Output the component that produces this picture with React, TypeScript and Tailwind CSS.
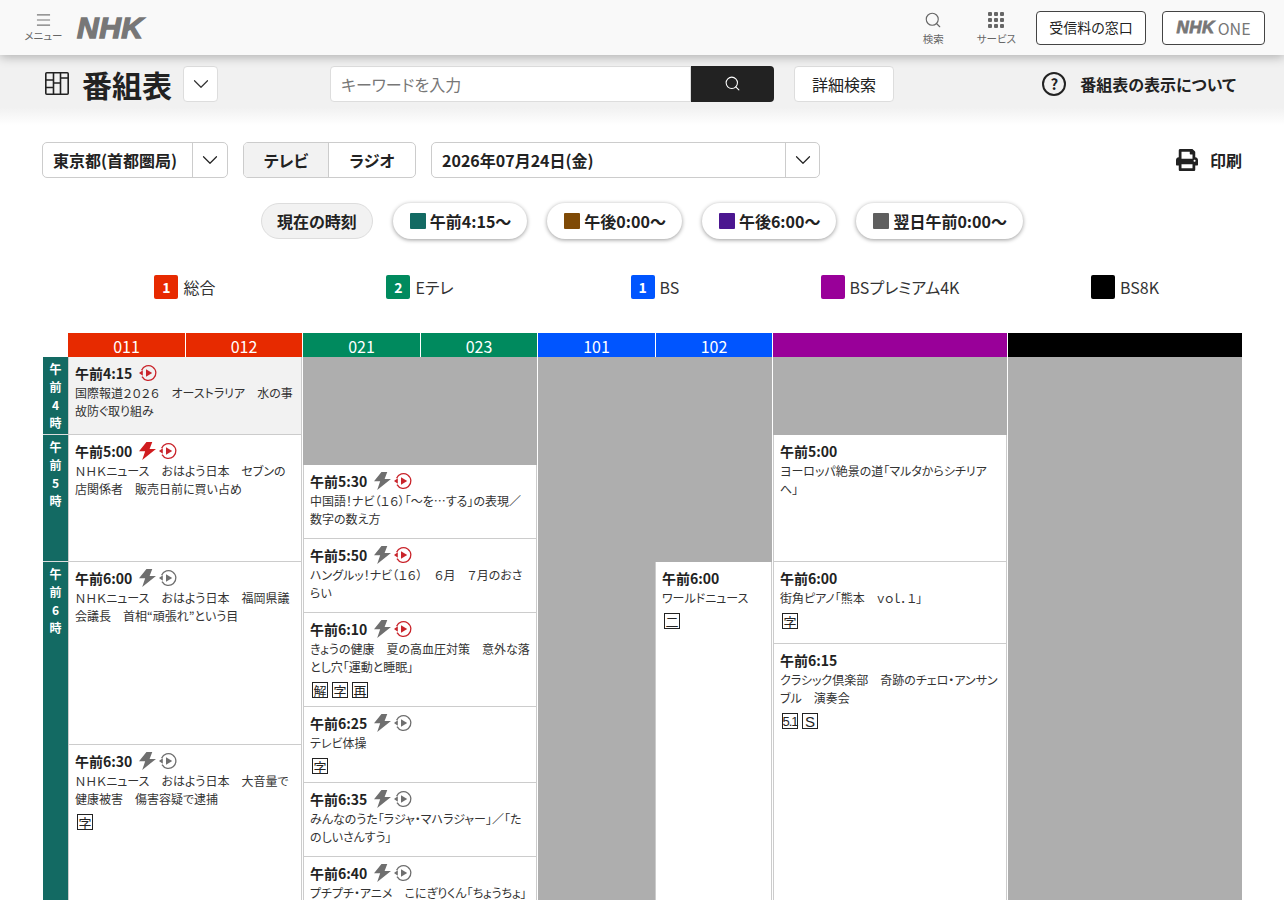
import { ChevronDown, Search } from 'lucide-react'
import { FaPrint } from 'react-icons/fa'

interface Program {
  time: string
  title: string
  height: number
  live?: boolean // 稲妻が赤
  replay?: boolean // 再生アイコンが赤
  icons?: 'none' | 'gray'
  badges?: string[]
  past?: boolean
}

// 番組名の英数字は全角で表示される
const zen = (s: string) => s.replace(/[!-~]/g, (c) => String.fromCharCode(c.charCodeAt(0) + 0xfee0))

function Bolt({ red }: { red?: boolean }) {
  return (
    <svg viewBox="0 0 16 17" className="w-[17px] h-[18px]" fill={red ? '#d01c1f' : '#6f6f6f'}>
      <path d="M7 0h5.5L10 6.5h6L3 17l2.8-8.2H0z" />
    </svg>
  )
}

function Replay({ red }: { red?: boolean }) {
  const c = red ? '#c9242b' : '#6f6f6f'
  return (
    <svg viewBox="0 0 18 18" className="w-[18px] h-[18px]" fill="none">
      <path d="M2.6 6.2A7.4 7.4 0 1 1 3 12.6" stroke={c} strokeWidth="1.3" />
      <path d="M0 9 3.8 6.2v5.6z" fill={c} />
      <path d="M7 5.2 13.2 9 7 12.8z" fill={c} />
    </svg>
  )
}

function Badge({ label }: { label: string }) {
  const latin = label === '5.1' || label === 'S'
  return (
    <span
      className={`w-[16px] h-[16px] border border-[#222] flex items-center justify-center leading-none text-[#222] bg-white [font-feature-settings:normal] ${
        latin ? `font-['Liberation_Sans',sans-serif] ${label === 'S' ? 'text-[15px]' : 'text-[13px] tracking-[-1px]'}` : 'text-[13px]'
      }`}
    >
      {label}
    </span>
  )
}

function ProgramCell({ p }: { p: Program }) {
  return (
    <div
      style={{ height: p.height }}
      className={`shrink-0 border-x border-b border-[#ccc] pl-[6px] pr-[6px] pt-[4px] overflow-hidden ${p.past ? 'bg-[#f2f2f2]' : 'bg-white'}`}
    >
      <div className="flex items-center h-[24px]">
        <span className="text-[14px] font-bold text-[#222] leading-none">{p.time}</span>
        {p.icons !== 'none' && (
          <span className="flex items-center ml-[7px] gap-[3px]">
            {p.past ? null : <Bolt red={p.live} />}
            <Replay red={p.replay} />
          </span>
        )}
      </div>
      <p className="text-[12px] leading-[18px] text-[#333] -mt-[1px]">{zen(p.title)}</p>
      {p.badges && (
        <div className="flex gap-[4px] mt-[6px] ml-[2px]">
          {p.badges.map((b) => (
            <Badge key={b} label={b} />
          ))}
        </div>
      )}
    </div>
  )
}

const sogo: Program[] = [
  { time: '午前4:15', title: '国際報道2026　オーストラリア　水の事故防ぐ取り組み', height: 78, past: true, replay: true },
  { time: '午前5:00', title: 'NHKニュース　おはよう日本　セブンの店関係者　販売日前に買い占め', height: 127, live: true, replay: true },
  { time: '午前6:00', title: 'NHKニュース　おはよう日本　福岡県議会議長　首相“頑張れ”という目', height: 183 },
  { time: '午前6:30', title: 'NHKニュース　おはよう日本　大音量で健康被害　傷害容疑で逮捕', height: 300, badges: ['字'] },
]

const etele: Program[] = [
  { time: '午前5:30', title: '中国語!ナビ(16)「〜を…する」の表現／数字の数え方', height: 74, replay: true },
  { time: '午前5:50', title: 'ハングルッ!ナビ(16)　6月　7月のおさらい', height: 74, replay: true },
  { time: '午前6:10', title: 'きょうの健康　夏の高血圧対策　意外な落とし穴「運動と睡眠」', height: 94, replay: true, badges: ['解', '字', '再'] },
  { time: '午前6:25', title: 'テレビ体操', height: 76, badges: ['字'] },
  { time: '午前6:35', title: 'みんなのうた「ラジャ・マハラジャー」／「たのしいさんすう」', height: 74 },
  { time: '午前6:40', title: 'プチプチ・アニメ　こにぎりくん「ちょうちょ」', height: 120 },
]

const premium: Program[] = [
  { time: '午前5:00', title: 'ヨーロッパ絶景の道「マルタからシチリアへ」', height: 127, icons: 'none' },
  { time: '午前6:00', title: '街角ピアノ「熊本　vol.1」', height: 82, icons: 'none', badges: ['字'] },
  { time: '午前6:15', title: 'クラシック倶楽部　奇跡のチェロ・アンサンブル　演奏会', height: 300, icons: 'none', badges: ['5.1', 'S'] },
]

const channels = [
  { label: '総合', mark: '1', color: 'bg-[#e72a00]' },
  { label: 'Eテレ', mark: '2', color: 'bg-[#008a5e]' },
  { label: 'BS', mark: '1', color: 'bg-[#0055ff]' },
  { label: 'BSプレミアム4K', mark: '', color: 'bg-[#990099]' },
  { label: 'BS8K', mark: '', color: 'bg-black' },
]

const timeTabs = [
  { label: '午前4:15〜', color: 'bg-[#136a63]' },
  { label: '午後0:00〜', color: 'bg-[#7f4a06]' },
  { label: '午後6:00〜', color: 'bg-[#4b1690]' },
  { label: '翌日午前0:00〜', color: 'bg-[#5f5f5f]' },
]

function HourCell({ hour, height }: { hour: string; height: number }) {
  return (
    <div
      style={{ height }}
      className="shrink-0 bg-[#136a63] border-b border-[#ddd] text-white text-[12px] font-bold leading-[18px] flex flex-col items-center pt-[3px]"
    >
      <span>午</span>
      <span>前</span>
      <span>{hour}</span>
      <span>時</span>
    </div>
  )
}

function ChannelHead({ color, codes }: { color: string; codes: string[] }) {
  return (
    <div className={`flex h-[24px] ${color} text-white text-[16px]`}>
      {codes.map((code, i) => (
        <span key={code} className={`text-center leading-[26px] ${i === 0 ? 'w-[118px] border-r border-white' : 'flex-1'}`}>
          {code}
        </span>
      ))}
    </div>
  )
}

export default function App() {
  return (
    <div className="h-[900px] overflow-hidden bg-white font-['Noto_Sans_CJK_JP','Noto_Sans',sans-serif] [font-feature-settings:'palt'] text-[#222]">
      {/* グローバルヘッダー */}
      <header className="relative z-10 h-[55px] bg-[#f9f9f9] shadow-[0_2px_10px_rgba(0,0,0,0.28)] flex items-center pl-[24px] pr-[19px]">
        <button className="flex flex-col items-center w-[39px] text-[#666]">
          <svg viewBox="0 0 16 14" className="w-[15px] h-[14px] mt-[1px]" stroke="#777" strokeWidth="1.2">
            <path d="M1 1.5h14M1 7h14M1 12.5h14" />
          </svg>
          <span className="text-[10.5px] leading-[14px] mt-[2px] whitespace-nowrap">メニュー</span>
        </button>
        <span className="ml-[14px] font-['Liberation_Sans',sans-serif] italic font-bold text-[30px] tracking-[0.5px] leading-none text-[#777] [-webkit-text-stroke:1.4px_#777]">
          NHK
        </span>
        <div className="ml-auto flex items-center">
          <button className="flex flex-col items-center text-[#666] mr-[33px]">
            <Search className="w-[18px] h-[18px] mt-[2px]" strokeWidth={1.5} />
            <span className="text-[10.5px] leading-[14px] mt-[3px]">検索</span>
          </button>
          <button className="flex flex-col items-center text-[#666] mr-[20px]">
            <svg viewBox="0 0 16 16" className="w-[16px] h-[16px] mt-[2px]" fill="#666">
              {[0, 6, 12].map((y) =>
                [0, 6, 12].map((x) => <rect key={`${x}-${y}`} x={x} y={y} width="4" height="4" rx="1" />),
              )}
            </svg>
            <span className="text-[10.5px] leading-[14px] mt-[4px]">サービス</span>
          </button>
          <button className="w-[110px] h-[34px] border border-[#444] rounded-[4px] bg-white text-[14px] text-[#222] flex items-center justify-center">
            受信料の窓口
          </button>
          <button className="ml-[16px] w-[103px] h-[34px] border border-[#444] rounded-[4px] bg-white text-[#777] flex items-center justify-center gap-[3px]">
            <span className="font-['Liberation_Sans',sans-serif] italic font-bold text-[17px] tracking-[0.5px] leading-none [-webkit-text-stroke:0.8px_#777]">NHK</span>
            <span className="text-[16px] leading-none">ONE</span>
          </button>
        </div>
      </header>

      {/* 番組表タイトル */}
      <div className="h-[70px] bg-gradient-to-b from-[#f1f1f1] from-75% to-white">
        <div className="h-[57px] flex items-center pl-[45px] pr-[48px]">
          <svg viewBox="0 0 24 23" className="w-[24px] h-[23px]" fill="none" stroke="#222" strokeWidth="1.6">
            <rect x="0.8" y="0.8" width="22.4" height="21.4" rx="1" />
            <path d="M8.5 1v21M15.5 1v21M1 8h7.5M1 15.5h7.5M8.5 11h7M15.5 6H23" />
          </svg>
          <h1 className="ml-[13px] text-[30px] font-bold leading-none text-[#222]">番組表</h1>
          <button className="ml-[11px] w-[35px] h-[36px] bg-white border border-[#ddd] rounded-[4px] flex items-center justify-center">
            <ChevronDown className="w-[26px] h-[26px] text-[#333]" strokeWidth={1.1} />
          </button>
          <div className="ml-[112px] flex h-[36px] w-[444px]">
            <div className="flex-1 bg-white border border-[#ddd] rounded-l-[4px] px-[10px] flex items-center text-[16px] text-[#777]">
              キーワードを入力
            </div>
            <button className="w-[83px] bg-[#222] rounded-r-[4px] flex items-center justify-center">
              <Search className="w-[17px] h-[17px] text-white" strokeWidth={1.5} />
            </button>
          </div>
          <button className="ml-[20px] w-[100px] h-[36px] bg-white border border-[#ddd] rounded-[4px] text-[16px] text-[#222]">
            詳細検索
          </button>
          <div className="ml-auto flex items-center">
            <span className="w-[24px] h-[24px] rounded-full border-2 border-[#222] flex items-center justify-center text-[15px] font-bold leading-none">?</span>
            <span className="ml-[14px] text-[16px] font-bold">番組表の表示について</span>
          </div>
        </div>
      </div>

      {/* 絞り込み */}
      <div className="flex items-center pl-[42px] pr-[42px] mt-[17px]">
        <div className="flex h-[36px] w-[186px] border border-[#ccc] rounded-[5px]">
          <span className="flex-1 flex items-center pl-[10px] text-[16px] font-bold">東京都(首都圏局)</span>
          <span className="w-[35px] border-l border-[#ccc] flex items-center justify-center">
            <ChevronDown className="w-[26px] h-[26px]" strokeWidth={1.1} />
          </span>
        </div>
        <div className="ml-[15px] flex h-[36px] w-[173px] border border-[#ccc] rounded-[5px] overflow-hidden text-[16px] font-bold">
          <span className="w-[85px] bg-[#f2f2f2] border-r border-[#ccc] flex items-center justify-center">テレビ</span>
          <span className="flex-1 flex items-center justify-center">ラジオ</span>
        </div>
        <div className="ml-[15px] flex h-[36px] w-[389px] border border-[#ccc] rounded-[5px]">
          <span className="flex-1 flex items-center pl-[10px] text-[16px] font-bold">2026年07月24日(金)</span>
          <span className="w-[34px] border-l border-[#ccc] flex items-center justify-center">
            <ChevronDown className="w-[26px] h-[26px]" strokeWidth={1.1} />
          </span>
        </div>
        <div className="ml-auto flex items-center gap-[12px]">
          <FaPrint className="w-[22px] h-[22px] text-[#222]" />
          <span className="text-[16px] font-bold">印刷</span>
        </div>
      </div>

      {/* 時間帯ジャンプ */}
      <div className="flex items-center justify-center gap-[20px] mt-[25px] h-[36px]">
        <button className="h-[36px] px-[15px] rounded-full bg-[#f2f2f2] border border-[#ddd] text-[16px] font-bold">現在の時刻</button>
        {timeTabs.map((t) => (
          <button
            key={t.label}
            className="h-[36px] pl-[17px] pr-[16px] rounded-full bg-white shadow-[0_1px_4px_rgba(0,0,0,0.4)] text-[16px] font-bold flex items-center gap-[4px]"
          >
            <span className={`w-[16px] h-[16px] rounded-[1px] ${t.color}`} />
            {t.label}
          </button>
        ))}
      </div>

      {/* チャンネル凡例 */}
      <div className="flex gap-px mt-[36px] pl-[68px] h-[24px]">
        {channels.map((c) => (
          <div key={c.label} className="w-[234px] flex items-center justify-center gap-[5px]">
            <span className={`w-[24px] h-[24px] rounded-[2px] ${c.color} text-white text-[14px] font-bold flex items-center justify-center`}>
              {c.mark}
            </span>
            <span className="text-[16px] text-[#333]">{c.label}</span>
          </div>
        ))}
      </div>

      {/* 番組表 */}
      <div className="mt-[34px] ml-[43px] w-[1199px] flex gap-px">
        <div className="w-[25px] shrink-0 pt-[24px] -mr-px">
          <HourCell hour="4" height={78} />
          <HourCell hour="5" height={127} />
          <HourCell hour="6" height={400} />
        </div>
        <div className="w-[234px] shrink-0">
          <ChannelHead color="bg-[#e72a00]" codes={['011', '012']} />
          {sogo.map((p) => (
            <ProgramCell key={p.time} p={p} />
          ))}
        </div>
        <div className="w-[234px] shrink-0">
          <ChannelHead color="bg-[#008a5e]" codes={['021', '023']} />
          <div className="h-[108px] bg-[#aeaeae]" />
          {etele.map((p) => (
            <ProgramCell key={p.time} p={p} />
          ))}
        </div>
        <div className="w-[234px] shrink-0">
          <ChannelHead color="bg-[#0055ff]" codes={['101', '102']} />
          <div className="flex">
            <div className="w-[117px] h-[600px] bg-[#aeaeae]" />
            <div className="flex-1">
              <div className="h-[205px] bg-[#aeaeae]" />
              <ProgramCell p={{ time: '午前6:00', title: 'ワールドニュース', height: 395, icons: 'none', badges: ['二'] }} />
            </div>
          </div>
        </div>
        <div className="w-[234px] shrink-0">
          <div className="h-[24px] bg-[#990099]" />
          <div className="h-[78px] bg-[#aeaeae]" />
          {premium.map((p) => (
            <ProgramCell key={p.time} p={p} />
          ))}
        </div>
        <div className="w-[234px] shrink-0">
          <div className="h-[24px] bg-black" />
          <div className="h-[600px] bg-[#aeaeae]" />
        </div>
      </div>
    </div>
  )
}
